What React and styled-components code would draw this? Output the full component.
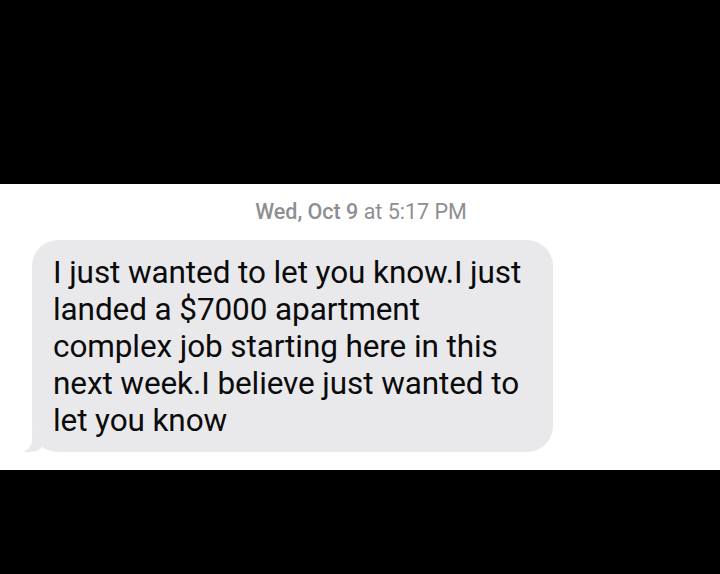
import React from 'react'
import styled, { createGlobalStyle } from 'styled-components'

const Global = createGlobalStyle`
    html, body {
        margin: 0;
        padding: 0;
        background: #000;
    }
`

const Page = styled.div`
    height: 574px;
    background: #000;
    display: flex;
    flex-direction: column;
    padding-top: 184px;
    box-sizing: border-box;
`

const Thread = styled.div`
    height: 286px;
    background: #fff;
    display: flex;
    flex-direction: column;
    padding: 15px 0 0 32px;
    box-sizing: border-box;
    font-family: Roboto, "Liberation Sans", sans-serif;
`

const Stamp = styled.div`
    text-align: center;
    color: #8e8e93;
    font-size: 21.5px;
    line-height: 26px;
    margin-left: -32px;
    padding-left: 2px;

    b {
        font-weight: 500;
    }
`

const Bubble = styled.div`
    position: relative;
    margin-top: 15px;
    width: 521px;
    height: 212px;
    box-sizing: border-box;
    background: #e9e9eb;
    border-radius: 26px;
    padding: 14px 10px 0 21px;
    color: #0b0b0b;
    font-size: 31.5px;
    line-height: 37px;
    letter-spacing: -0.1px;

    &::before {
        content: '';
        position: absolute;
        left: -8px;
        bottom: 0;
        width: 24px;
        height: 22px;
        background: #e9e9eb;
        border-bottom-right-radius: 18px;
    }

    &::after {
        content: '';
        position: absolute;
        left: -12px;
        bottom: 0;
        width: 12px;
        height: 22px;
        background: #fff;
        border-bottom-right-radius: 12px;
    }
`

const Line = styled.div`
    white-space: nowrap;
`

export default function App() {
    const lines = [
        'I just wanted to let you know.I just',
        'landed a $7000 apartment',
        'complex job starting here in this',
        'next week.I believe just wanted to',
        'let you know',
    ]
    return (
        <>
            <Global />
            <Page>
                <Thread>
                    <Stamp><b>Wed, Oct 9</b> at 5:17 PM</Stamp>
                    <Bubble>
                        {lines.map((l) => <Line key={l}>{l}</Line>)}
                    </Bubble>
                </Thread>
            </Page>
        </>
    )
}
